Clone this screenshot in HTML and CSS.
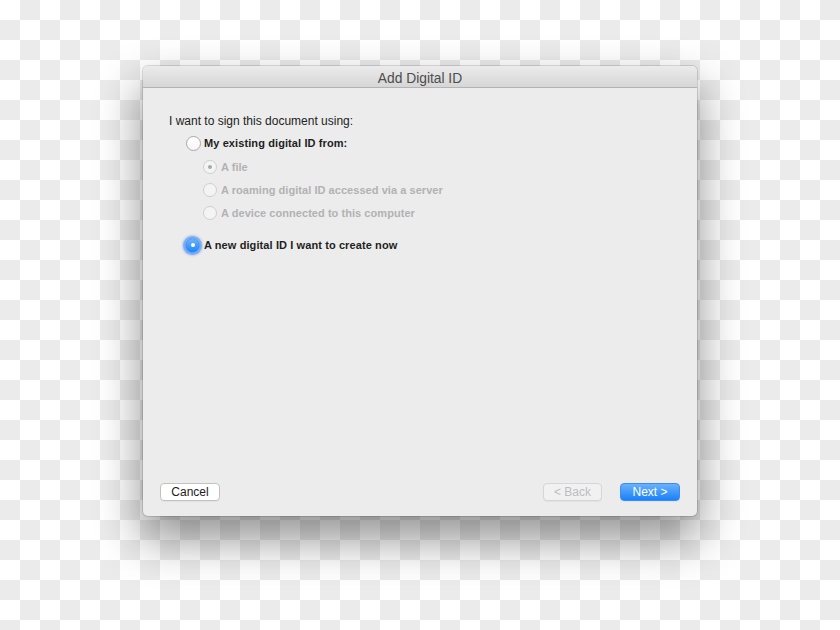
FILE: index.html
```html
<!DOCTYPE html>
<html>
<head>
<meta charset="utf-8">
<link rel="stylesheet" href="styles.css">
</head>
<body>
<div class="stage">
  <div class="dialog">
    <div class="titlebar">Add Digital ID</div>
    <div class="content">
      <div class="prompt">I want to sign this document using:</div>
      <div class="option main">
        <span class="radio"></span>
        <span class="label">My existing digital ID from:</span>
      </div>
      <div class="suboptions">
        <div class="option sub">
          <span class="radio disabled checked-dis"></span>
          <span class="label dis">A file</span>
        </div>
        <div class="option sub">
          <span class="radio disabled"></span>
          <span class="label dis">A roaming digital ID accessed via a server</span>
        </div>
        <div class="option sub">
          <span class="radio disabled"></span>
          <span class="label dis">A device connected to this computer</span>
        </div>
      </div>
      <div class="option main new">
        <span class="radio selected"></span>
        <span class="label">A new digital ID I want to create now</span>
      </div>
    </div>
    <div class="footer">
      <button class="btn">Cancel</button>
      <div class="right">
        <button class="btn disabled-btn">&lt; Back</button>
        <button class="btn primary">Next &gt;</button>
      </div>
    </div>
  </div>
</div>
</body>
</html>
```
FILE: styles.css
```css
html, body {
  margin: 0;
  padding: 0;
}
body {
  width: 840px;
  height: 630px;
  overflow: hidden;
  background-color: #ffffff;
  background-image: conic-gradient(#ebebeb 25%, transparent 0 50%, #ebebeb 0 75%, transparent 0);
  background-size: 40px 40px;
  font-family: "Liberation Sans", Arial, sans-serif;
}
.stage {
  padding: 66px 0 0 143px;
}
.dialog {
  width: 554px;
  height: 450px;
  background: #ececec;
  border-radius: 5px;
  box-shadow: 0 0 0 1px rgba(0,0,0,0.12), 0 22px 45px 2px rgba(0,0,0,0.42);
  display: flex;
  flex-direction: column;
  overflow: hidden;
}
.titlebar {
  height: 21px;
  flex: none;
  background: linear-gradient(#ebebeb, #d6d6d6);
  border-bottom: 1px solid #b3b3b3;
  text-align: center;
  font-size: 13.8px;
  line-height: 25px;
  color: #4d4d4d;
}
.content {
  flex: 1;
  padding: 25px 0 0 26px;
}
.prompt {
  font-size: 12px;
  color: #222;
  line-height: 16px;
}
.option {
  display: flex;
  align-items: center;
}
.option.main {
  margin-top: 6px;
  margin-left: 17px;
  height: 16px;
}
.option.new {
  margin-top: 16px;
  margin-left: 16px;
}
.option.new .label {
  margin-left: 4px;
}
.suboptions {
  margin-left: 34px;
  margin-top: 8px;
  display: flex;
  flex-direction: column;
  gap: 7px;
}
.option.sub {
  height: 16px;
}
.label {
  font-size: 11px;
  font-weight: bold;
  color: #1e1e1e;
  margin-left: 3px;
  letter-spacing: 0.1px;
}
.label.dis {
  color: #b2b2b2;
  margin-left: 4px;
  letter-spacing: 0.05px;
}
.radio {
  width: 13px;
  height: 13px;
  border-radius: 50%;
  background: linear-gradient(#ffffff, #f6f6f6);
  border: 1px solid #a9a9a9;
  box-sizing: content-box;
  position: relative;
  flex: none;
}
.radio.disabled {
  width: 12px;
  height: 12px;
  border-color: #cfcfcf;
  background: #f4f4f4;
}
.radio.checked-dis::after {
  content: "";
  position: absolute;
  left: 4px;
  top: 4px;
  width: 4px;
  height: 4px;
  border-radius: 50%;
  background: #a8a8a8;
}
.radio.selected {
  border-color: #3f8cf0;
  background: linear-gradient(#6cb3fa, #1f85fb);
  box-shadow: 0 0 0 2px rgba(90,150,240,0.6), 0 0 2px 3px rgba(110,165,245,0.45);
}
.radio.selected::after {
  content: "";
  position: absolute;
  left: 4.5px;
  top: 4.5px;
  width: 4px;
  height: 4px;
  border-radius: 50%;
  background: #ffffff;
}
.footer {
  flex: none;
  display: flex;
  justify-content: space-between;
  align-items: center;
  padding: 0 17px 15px 17px;
}
.right {
  display: flex;
  gap: 18px;
}
.btn {
  font-family: "Liberation Sans", Arial, sans-serif;
  font-size: 12px;
  height: 18px;
  width: 60px;
  padding: 0;
  border-radius: 4px;
  border: 1px solid #c2c2c2;
  background: #ffffff;
  color: #222;
  box-shadow: 0 1px 0 rgba(0,0,0,0.04);
  line-height: 16px;
}
.btn.disabled-btn {
  width: 59px;
  background: #f1f1f1;
  border-color: #d6d6d6;
  color: #bdbdbd;
}
.btn.primary {
  background: linear-gradient(#6ab1fa, #1a81fb);
  border-color: #3a8cf1;
  color: #ffffff;
}
```
